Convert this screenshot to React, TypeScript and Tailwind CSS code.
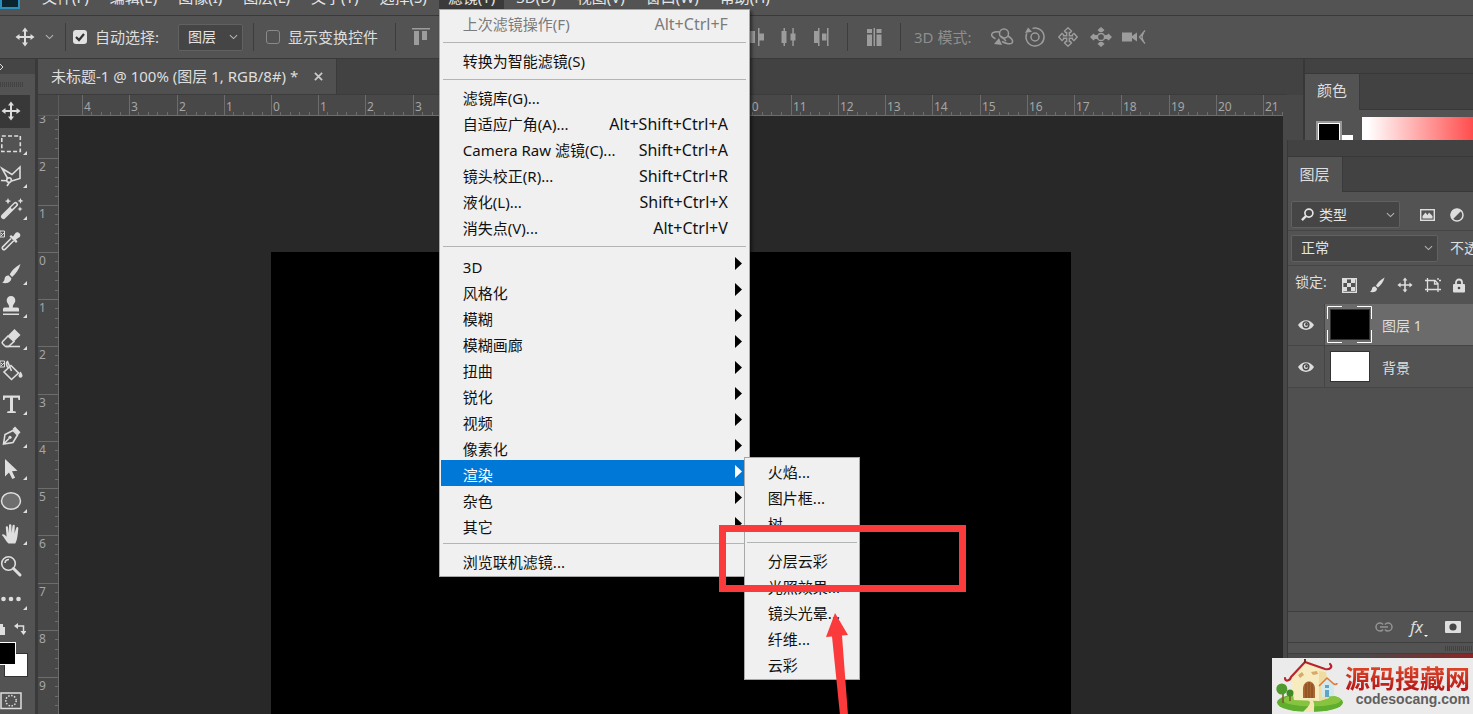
import type { ReactNode } from "react"

const UNIT = 47.24

const menusBefore = ["文件(F)", "编辑(E)", "图像(I)", "图层(L)", "文字(Y)", "选择(S)"]
const menusAfter = ["3D(D)", "视图(V)", "窗口(W)", "帮助(H)"]

interface MenuEntry {
  label: string
  keys?: string
  disabled?: boolean
}

const filterGroups: MenuEntry[][] = [
  [{ label: "上次滤镜操作(F)", keys: "Alt+Ctrl+F", disabled: true }],
  [{ label: "转换为智能滤镜(S)" }],
  [
    { label: "滤镜库(G)..." },
    { label: "自适应广角(A)...", keys: "Alt+Shift+Ctrl+A" },
    { label: "Camera Raw 滤镜(C)...", keys: "Shift+Ctrl+A" },
    { label: "镜头校正(R)...", keys: "Shift+Ctrl+R" },
    { label: "液化(L)...", keys: "Shift+Ctrl+X" },
    { label: "消失点(V)...", keys: "Alt+Ctrl+V" },
  ],
]

const filterCategories = ["3D", "风格化", "模糊", "模糊画廊", "扭曲", "锐化", "视频", "像素化", "渲染", "杂色", "其它"]

const renderGroups = [
  ["火焰...", "图片框...", "树..."],
  ["分层云彩", "光照效果...", "镜头光晕...", "纤维...", "云彩"],
]

function MoveIcon({ className }: { className?: string }) {
  return (
    <svg viewBox="0 0 20 20" className={className} fill="currentColor">
      <path d="M10 .5 13 4.500H11V9h4.500V7l4 3-4 3v-2H11v4.500h2L10 19.500 7 15.500h2V11H4.500v2l-4-3 4-3v2H9V4.500H7z" />
    </svg>
  )
}

function BrushIcon({ className }: { className?: string }) {
  return (
    <svg viewBox="0 0 20 20" className={className} fill="currentColor">
      <path d="M19.500.5C14 3.500 10.500 7.500 8.700 10.800l2.400 2.400C14.500 10.500 18 6 19.500.5zM7.700 11.800c-2-.3-3.700.8-4 2.800-.2 1.700-1 3-2.700 3.900 3.500 1.200 8.800.4 9.200-3.900z" />
    </svg>
  )
}

function Chevron({ className }: { className?: string }) {
  return (
    <svg viewBox="0 0 10 6" className={className} fill="none" stroke="currentColor" strokeWidth="1.200">
      <path d="M1 1l4 3.800L9 1" />
    </svg>
  )
}

function Select({ label, value, className, icon }: { label: string; value: string; className: string; icon?: ReactNode }) {
  return (
    <div className={`relative flex h-[27px] items-center rounded-[2px] border border-[#616161] bg-[#454545] text-[#e4e4e4] ${className}`}>
      {icon}
      <select aria-label={label} className="h-full min-w-0 flex-1 appearance-none bg-transparent pl-[9px] text-sm outline-none">
        <option>{value}</option>
      </select>
      <Chevron className="pointer-events-none mr-1 h-[6px] w-[9px] text-[#b5b5b5]" />
    </div>
  )
}

function Separator() {
  return (
    <div className="flex h-[11px] items-center px-[2px]">
      <div className="h-px w-full bg-[#b4b4b4]" />
    </div>
  )
}

function RenderMenu() {
  return (
    <div className="absolute left-[304px] top-[447px] z-10 w-[116px] border border-[#a8a8a8] bg-[#f0f0f0] py-px text-[#111]">
      {renderGroups.map((group, i) => (
        <div key={i}>
          {i > 0 && <Separator />}
          {group.map((label) => (
            <button key={label} className="block h-[26px] w-full whitespace-nowrap pl-[23px] text-left">
              {label}
            </button>
          ))}
        </div>
      ))}
    </div>
  )
}

function FilterMenu() {
  return (
    <div className="absolute left-0 top-full z-20 w-[311px] border border-[#a8a8a8] bg-[#f0f0f0] p-px text-[15px] leading-[26px] text-[#111] shadow-[2px_2px_3px_rgba(0,0,0,0.5)]">
      {filterGroups.map((group, i) => (
        <div key={i}>
          {group.map((item) => (
            <button
              key={item.label}
              disabled={item.disabled}
              className="flex h-[26px] w-full items-center justify-between whitespace-nowrap pl-[22px] pr-[20px] disabled:text-[#7b7b7b]"
            >
              <span>{item.label}</span>
              <span className="text-base leading-[26px]">{item.keys}</span>
            </button>
          ))}
          <Separator />
        </div>
      ))}
      {filterCategories.map((label) => (
        <button
          key={label}
          className={
            label === "渲染"
              ? "flex h-[26px] w-full items-center justify-between bg-[#0078d7] pl-[22px] pr-[6px] pt-[3px] text-white"
              : "flex h-[26px] w-full items-center justify-between pl-[22px] pr-[6px] pt-[3px]"
          }
        >
          <span>{label}</span>
          <svg viewBox="0 0 7 20" className="h-5 w-[7px]" fill={label === "渲染" ? "#fff" : "#000"}>
            <path d="M0 0v13l7-6.500z" />
          </svg>
        </button>
      ))}
      <Separator />
      <button className="block h-[26px] w-full pl-[22px] text-left">浏览联机滤镜...</button>
      <RenderMenu />
    </div>
  )
}

function MenuBar() {
  return (
    <header className="relative z-20 flex h-[15px] shrink-0 items-end gap-[3px] pb-[6px] text-[15px] leading-6 text-[#e6e6e6]">
      <div className="w-[30px]">
        <div className="h-6 w-[20px] border-2 border-[#2a8fbd] bg-[#0a2430]" />
      </div>
      {menusBefore.map((label) => (
        <button key={label} className="whitespace-nowrap px-[9px] leading-6">
          {label}
        </button>
      ))}
      <div className="relative">
        <button className="whitespace-nowrap bg-[#3a3a3a] px-[9px] leading-6">滤镜(T)</button>
        <FilterMenu />
      </div>
      {menusAfter.map((label) => (
        <button key={label} className="whitespace-nowrap px-[9px] leading-6">
          {label}
        </button>
      ))}
    </header>
  )
}

const alignShapes = [
  "M1 1h18v1.500H1zM3 4h5v14H3zM11 4h5v9h-5z",
  "M1 9h18v1.500H1zM3 2h5v16H3zM11 5h5v10h-5z",
  "M1 18h18v1.500H1zM3 2h5v14H3zM11 7h5v9h-5z",
]

const distributeShapes = [
  "M1 1h1.500v18H1zM4 4h13v5H4zM4 11h9v5H4z",
  "M9 1h1.500v18H9zM2 4h16v5H2zM5 11h10v5H5z",
  "M18 1h1.500v18H18zM4 4h13v5H4zM8 11h9v5H8z",
  "M1 2h18v1.500H1zM4 3h12v5H4zM1 11h18v1.500H1zM4 12h12v5H4z",
  "M1 5h18v1.500H1zM4 3h12v5H4zM1 14h18v1.500H1zM4 12h12v5H4z",
  "M1 8h18v1.500H1zM4 3h12v5H4zM1 17h18v1.500H1zM4 12h12v5H4z",
  "M2 1h1.500v18H2zM3 4h5v12H3zM11 1h1.500v18H11zM12 6h5v8h-5z",
  "M3 4h5v12H3zM11 1h1.500v18H11zM12.500 6.500H17v7h-4.500z",
  "M2.500 4h5v12h-5zM4.500 1H6v18H4.500zM11.500 6.500h5v7h-5zM13.300 1h1.500v18h-1.500z",
  "M3 4h4v12H3zM7 1h1.500v18H7zM11 6.500h4.500v7H11zM16 1h1.500v18H16z",
]

function ShapeButton({ d }: { d: string }) {
  return (
    <button className="flex w-8 justify-center text-[#9c9c9c]">
      <svg viewBox="0 0 20 20" className="size-5" fill="currentColor">
        <path d={d} />
      </svg>
    </button>
  )
}

function Divider() {
  return <div className="h-7 w-px shrink-0 bg-[#3d3d3d]" />
}

function OptionsBar() {
  return (
    <div className="flex h-[44px] shrink-0 items-center border-y border-[#393939] text-[15px] text-[#dedede]">
      <MoveIcon className="ml-[15px] size-5 shrink-0" />
      <Chevron className="ml-[10px] h-[6px] w-[9px] shrink-0 text-[#b5b5b5]" />
      <div className="w-[11px] shrink-0" />
      <Divider />
      <label className="ml-[7px] flex shrink-0 items-center gap-2">
        <span className="relative flex">
          <input type="checkbox" defaultChecked className="peer size-[14px] appearance-none rounded-[3px] bg-[#e2e2e2]" />
          <svg viewBox="0 0 14 14" className="pointer-events-none absolute inset-0 hidden size-[14px] peer-checked:block" fill="none" stroke="#333" strokeWidth="2.200">
            <path d="M3 7l3 3 5-6" />
          </svg>
        </span>
        <span className="w-[68px] whitespace-nowrap">自动选择:</span>
      </label>
      <div className="ml-[15px] w-[65px] shrink-0">
        <Select label="自动选择" value="图层" className="w-full" />
      </div>
      <div className="w-[10px] shrink-0" />
      <Divider />
      <label className="ml-3 flex shrink-0 items-center gap-2">
        <input type="checkbox" className="size-[14px] appearance-none rounded-[3px] border border-[#8a8a8a]" />
        显示变换控件
      </label>
      <div className="w-[17px] shrink-0" />
      <Divider />
      <div className="ml-[9px] flex shrink-0">
        {alignShapes.map((d) => (
          <ShapeButton key={d} d={d} />
        ))}
      </div>
      <div className="flex w-4 shrink-0 justify-center">
        <Divider />
      </div>
      <div className="flex shrink-0">
        {distributeShapes.map((d) => (
          <ShapeButton key={d} d={d} />
        ))}
      </div>
      <div className="flex shrink-0 items-center gap-[10px] pl-[10px]">
        <Divider />
        <ShapeButton d="M3 2h5v4H3zM3 7.500h5V19H3zM9.500 1h1.500v18H9.500zM12.500 2h5v4h-5zM12.500 7.500h5V19h-5z" />
        <Divider />
      </div>
      <span className="ml-[13px] shrink-0 text-[#8e8e8e]">3D 模式:</span>
      <div className="ml-[14px] flex shrink-0 text-[#9c9c9c]">
        <button className="flex w-[33px] justify-center">
          <svg viewBox="0 0 24 20" className="h-5 w-6" fill="none" stroke="currentColor" strokeWidth="1.500">
            <circle cx="14" cy="6.500" r="4.500" />
            <path d="M9.500 5C4 4 .5 6.500 2 9c.6 1 2 2 3.500 2.700M18 9c4 2.500 5.500 5 4 7-1.500 1.500-6 .8-10-1.500M11 9l5 5" />
            <path d="M4 17l8 1-3-7z" fill="currentColor" stroke="none" />
          </svg>
        </button>
        <button className="flex w-[33px] justify-center">
          <svg viewBox="0 0 20 20" className="size-5" fill="none" stroke="currentColor" strokeWidth="1.500">
            <circle cx="10" cy="10" r="4" />
            <path d="M7.500 1.400a9 9 0 1 1-5.700 5" />
            <path d="M0 6 3 .5l4 4.300z" fill="currentColor" stroke="none" />
          </svg>
        </button>
        <button className="flex w-[33px] justify-center">
          <svg viewBox="0 0 20 20" className="size-5" fill="none" stroke="currentColor" strokeWidth="1.400">
            <path d="M10 .8 13.500 4 12.500 5.500h-1.200v3.200h3.200V7.500L16 6.500l3.200 3.500-3.200 3.500-1.500-1v-1.200h-3.200v3.200h1.200l1 1.500L10 19.200 6.500 16l1-1.500h1.200v-3.200H5.500v1.200l-1.500 1L.8 10 4 6.500l1.500 1v1.200h3.200V5.500H7.500L6.500 4z" />
          </svg>
        </button>
        <button className="flex w-[33px] justify-center">
          <svg viewBox="0 0 22 20" className="h-5 w-[22px]" fill="currentColor">
            <circle cx="11" cy="10" r="3.600" fill="none" stroke="currentColor" strokeWidth="1.500" />
            <path d="M11 0l3.500 3-2 2h-3l-2-2zM11 20l3.500-3-2-2h-3l-2 2zM0 10l3.500-3.500L5 8h2v4H5l-1.500 1.500zM22 10l-3.500-3.500L17 8h-2v4h2l1.500 1.500z" />
          </svg>
        </button>
        <button className="flex w-[33px] justify-center">
          <svg viewBox="0 0 24 20" className="h-5 w-6" fill="currentColor">
            <path d="M0 5.500h10V9l5-3.500v9L10 11v3.500H0z" />
            <path d="M23 3.500l-5.500 6.500 5.500 6.500M21.500 6c-1.800 2.500-1.800 5.500 0 8" fill="none" stroke="currentColor" strokeWidth="1.300" />
          </svg>
        </button>
      </div>
    </div>
  )
}

const stroke = { fill: "none", stroke: "currentColor", strokeWidth: 1.6 }

const tools: { name: string; flyout: boolean; icon: ReactNode }[] = [
  { name: "移动", flyout: false, icon: <path d="M11 1.500 14 5.500H12V10h4.500V8l4 3-4 3v-2H12v4.500h2L11 20.500 8 16.500h2V12H5.500v2l-4-3 4-3v2H10V5.500H8z" fill="currentColor" /> },
  { name: "矩形选框", flyout: true, icon: <rect x="1.800" y="3" width="18.500" height="15.500" {...stroke} strokeDasharray="4 2.200" /> },
  {
    name: "套索",
    flyout: true,
    icon: (
      <g {...stroke}>
        <path d="M8 14 2 3.500l10 6L20 2v11.500l-8.500 2.500" />
        <circle cx="9" cy="15" r="2.300" />
        <path d="M1 15.500l6 .3M9.500 17.300 7 21" />
      </g>
    ),
  },
  {
    name: "魔棒",
    flyout: true,
    icon: (
      <g>
        <path d="M3.500 18.500 15.500 6.500" stroke="currentColor" strokeWidth="5" strokeLinecap="round" />
        <path d="M12 9.800l3.400-3.300" stroke="#535353" strokeWidth="2" strokeLinecap="round" />
        <path d="M8 0l1 2.200L11.200 3 9 4 8 6.200 7 4 4.800 3 7 2.200zM20.500 0l.9 2 2 .9-2 .9-.9 2-.9-2-2-.9 2-.9zM20 8.500l.8 1.700 1.700.8-1.700.8-.8 1.700-.8-1.700-1.700-.8 1.700-.8z" fill="currentColor" />
      </g>
    ),
  },
  {
    name: "吸管",
    flyout: false,
    icon: (
      <g>
        <path d="M11 8.500l-8.500 8.600c-1 1.200.8 3.400 2.500 2.200l8.700-8.500" {...stroke} />
        <path d="M9.500 6.500 11 5l2 1.500L15.500 3c2-2.500 6.500 1 4.200 4L16 9.500l1.500 2-1.500 1.500z" fill="currentColor" />
        <path d="M0 1h4.500v6H0z" fill="none" stroke="currentColor" />
        <path d="M1 3h1v1H1zM3 3h1v1H3zM2 4h1v1H2zM1 5h1v1H1z" fill="currentColor" />
      </g>
    ),
  },
  { name: "画笔", flyout: true, icon: <path d="M20.500 1C15 4 11.500 8 9.700 11.500l2.400 2.400C15.500 11 19 6.500 20.500 1zM8.700 12.500c-2-.3-3.700.8-4 2.800-.2 1.700-.8 3.500-2.500 4.400 3.500 1.200 8.800.4 9.200-4.400z" fill="currentColor" /> },
  { name: "仿制图章", flyout: true, icon: <path d="M11 1a4.300 4.300 0 0 0-4.300 4.400c0 2.600 2.500 3.400 2.500 7.100H4.500A1.500 1.500 0 0 0 3 14v2.500h16V14a1.500 1.500 0 0 0-1.500-1.500h-4.700c0-3.700 2.500-4.500 2.500-7.100A4.300 4.300 0 0 0 11 1zM3 18.500h16V20H3z" fill="currentColor" /> },
  {
    name: "橡皮擦",
    flyout: true,
    icon: (
      <g>
        <path d="M8 7.500 14.500 1 20.500 7 14 13.500z" fill="currentColor" />
        <path d="M8 8l-5.300 5.500c-.8.8-.8 1.500 0 2.300L5.500 18.500h3l5.500-5z" {...stroke} />
        <path d="M6 18.500h14" {...stroke} />
      </g>
    ),
  },
  {
    name: "油漆桶",
    flyout: false,
    icon: (
      <g>
        <path d="M11 5.500 4 12l7.500 7.500L18.500 13zM11.500 11 7.500 1.500C6 2 6 6 8.500 8" {...stroke} />
        <path d="M20.500 11.500c1.300 2 2 3.300 2 4.300a2 2 0 0 1-4 0c0-1 .7-2.300 2-4.300z" fill="currentColor" />
        <path d="M0 1h4.500v6H0z" fill="none" stroke="currentColor" />
        <path d="M1 3h1v1H1zM3 3h1v1H3zM2 4h1v1H2zM1 5h1v1H1z" fill="currentColor" />
      </g>
    ),
  },
  { name: "文字", flyout: true, icon: <path d="M3 2.500h17V7h-1.500l-.5-2.300h-5V18l2.800.5V20H7.200v-1.500L10 18V4.700H5L4.500 7H3z" fill="currentColor" /> },
  {
    name: "钢笔",
    flyout: true,
    icon: (
      <g>
        <path d="M3.500 19 5 9.500l8-4L17.500 10 13 17.500zM3.500 19l5.500-5.500" {...stroke} />
        <circle cx="10" cy="12.300" r="1.600" fill="currentColor" />
        <path d="M12.500 4 15 1.500l5.500 5.700L18 10z" fill="currentColor" />
      </g>
    ),
  },
  { name: "路径选择", flyout: true, icon: <path d="M5 1v17.500l4-4 3.300 6.500 2.800-1.300L12 13.200l5.500-.5z" fill="currentColor" /> },
  { name: "椭圆", flyout: true, icon: <ellipse cx="11" cy="11" rx="9.500" ry="8.300" fill="#6e6e6e" stroke="currentColor" strokeWidth="1.500" /> },
  { name: "抓手", flyout: true, icon: <path d="M8.500 20.500c-2.500-2-4-6-6.700-8.500 1-1.500 3-.8 4.800 1.700L5.800 4.500c0-1.500 2-1.600 2.300 0l.9 5.700V2.500c0-1.700 2.300-1.700 2.400 0l.2 7.500.9-7.300c.3-1.500 2.300-1.300 2.300.2l-.3 7.600 1.700-5.600c.5-1.400 2.300-.9 2.100.6-.5 4-.6 11-3 15z" fill="currentColor" /> },
  {
    name: "缩放",
    flyout: false,
    icon: (
      <g>
        <circle cx="8.500" cy="8.500" r="6.800" {...stroke} />
        <path d="M5 8a4 4 0 0 1 4-3.500" {...stroke} />
        <path d="M13.500 13.500 20 20" stroke="currentColor" strokeWidth="3" strokeLinecap="round" />
      </g>
    ),
  },
  {
    name: "更多",
    flyout: true,
    icon: (
      <g fill="currentColor">
        <circle cx="3.500" cy="11" r="2.300" />
        <circle cx="11" cy="11" r="2.300" />
        <circle cx="18.500" cy="11" r="2.300" />
      </g>
    ),
  },
]

function Toolbox() {
  return (
    <aside className="flex w-[38px] shrink-0 flex-col border-r-[3px] border-[#3a3a3a] text-[#dedede]">
      <div className="flex h-[15px] items-center bg-[#454545]">
        <svg viewBox="0 0 4 8" className="h-2 w-1" fill="none" stroke="currentColor">
          <path d="M0 1l3 3-3 3" />
        </svg>
      </div>
      <div className="flex h-[21px] items-center">
        <div className="h-[5px] w-[24px] bg-[repeating-linear-gradient(90deg,#424242_0_1px,#535353_1px_2px)]" />
      </div>
      <div className="flex h-[520px] shrink-0 flex-col">
        {tools.map((tool, i) => (
          <button
            key={tool.name}
            aria-label={tool.name}
            className={i === 0 ? "flex w-[30px] flex-1 items-center bg-[#383838]" : "flex flex-1 items-center"}
          >
            <svg viewBox="0 0 22 22" className="size-[22px] overflow-visible">
              {tool.icon}
            </svg>
            {tool.flyout && (
              <svg viewBox="0 0 4 4" className="mb-[5px] ml-px size-1 self-end" fill="currentColor">
                <path d="M4 0v4H0z" />
              </svg>
            )}
          </button>
        ))}
      </div>
      <div className="flex h-[27px] shrink-0 items-center justify-between pr-[9px]">
        <svg viewBox="0 0 5 12" className="h-3 w-[5px]" fill="currentColor">
          <path d="M0 1h3v3h2v8H0z" />
        </svg>
        <svg viewBox="0 0 12 12" className="size-3" fill="none" stroke="currentColor" strokeWidth="1.500">
          <path d="M3 3h6.500v6" />
          <path d="M4 0v6L0 3zM6.500 8h6l-3 4z" fill="currentColor" stroke="none" />
        </svg>
      </div>
      <div className="relative h-[36px] shrink-0">
        <div className="absolute left-1 top-[11px] h-[24px] w-[24px] border border-[#333] bg-white" />
        <div className="absolute left-0 top-0 h-[23px] w-4 border-y border-r border-white bg-black" />
      </div>
      <button aria-label="快速蒙版" className="mt-[14px] flex shrink-0">
        <svg viewBox="0 0 22 18" className="h-[18px] w-[22px]" fill="none" stroke="currentColor" strokeWidth="1.500">
          <rect x="1" y="1" width="20" height="15.500" />
          <circle cx="11" cy="8.700" r="5.200" strokeDasharray="1.500 1.500" />
        </svg>
      </button>
    </aside>
  )
}

const minors = [1, 2, 3, 4]
const horizontalMarks = Array.from({ length: 26 }, (_, i) => i - 4)
const verticalMarks = Array.from({ length: 13 }, (_, i) => i - 3)

function HorizontalRuler() {
  return (
    <div className="relative h-[21px] flex-1 overflow-hidden border-b border-[#6c6c6c]">
      {horizontalMarks.map((n) => (
        <div key={n} className="absolute inset-y-0" style={{ left: Math.round(212 + n * UNIT) }}>
          <span className="absolute inset-y-0 left-0 w-px bg-[#6c6c6c]" />
          <span className="block pl-[2px] text-xs leading-[24px]">{Math.abs(n)}</span>
          {minors.map((m) => (
            <span key={m} className="absolute bottom-0 h-[3px] w-px bg-[#6c6c6c]" style={{ left: Math.round((m * UNIT) / 5) }} />
          ))}
        </div>
      ))}
    </div>
  )
}

function VerticalRuler() {
  return (
    <div className="relative w-[21px] shrink-0 overflow-hidden border-r border-[#6c6c6c] bg-[#484848]">
      {verticalMarks.map((n) => (
        <div key={n} className="absolute inset-x-0" style={{ top: Math.round(136 + n * UNIT) }}>
          <span className="absolute inset-x-0 top-0 h-px bg-[#6c6c6c]" />
          <span className="block pl-px text-xs leading-[18px]">{Math.abs(n)}</span>
          {minors.map((m) => (
            <span key={m} className="absolute right-0 h-px w-[3px] bg-[#6c6c6c]" style={{ top: Math.round((m * UNIT) / 5) }} />
          ))}
        </div>
      ))}
    </div>
  )
}

function DocumentArea() {
  return (
    <main className="flex min-w-0 flex-1 flex-col text-[#a5a5a5]">
      <div className="flex h-[36px] shrink-0 border-b border-[#3c3c3c] bg-[#424242]">
        <div className="flex items-center gap-4 border-r border-[#3a3a3a] bg-[#505050] pl-[13px] pr-[13px] text-[15px] text-[#dedede]">
          <span className="whitespace-nowrap">未标题-1 @ 100% (图层 1, RGB/8#) *</span>
          <button aria-label="关闭">
            <svg viewBox="0 0 10 10" className="size-[9px]" stroke="#c8c8c8" strokeWidth="2">
              <path d="M1 1l8 8M9 1L1 9" />
            </svg>
          </button>
        </div>
      </div>
      <div className="flex shrink-0 bg-[#484848]">
        <div className="w-[21px] shrink-0 border-b border-r border-[#5c5c5c]" />
        <HorizontalRuler />
        <div className="w-1" />
      </div>
      <div className="flex min-h-0 flex-1">
        <VerticalRuler />
        <div className="min-w-0 flex-1 overflow-hidden bg-[#282828] pl-[212px] pt-[136px]">
          <div className="h-full w-[800px] bg-black" />
        </div>
        <div className="w-1 bg-[#484848]" />
      </div>
    </main>
  )
}

function EyeIcon() {
  return (
    <svg viewBox="0 0 16 12" className="h-3 w-4">
      <path d="M0 6c4-6.500 12-6.500 16 0-4 6.500-12 6.500-16 0z" fill="#dedede" />
      <circle cx="8" cy="5.800" r="3.600" fill="#484848" />
      <circle cx="8" cy="5.800" r="2.200" fill="#dedede" />
      <circle cx="8.500" cy="5.400" r="1.300" fill="#484848" />
    </svg>
  )
}

function ColorPanel() {
  return (
    <section className="ml-4 h-[81px] shrink-0 overflow-hidden border-l-2 border-[#383838] bg-[#535353]">
      <div className="h-[15px] border-b border-[#383838] bg-[#424242]" />
      <div className="flex h-[36px] bg-[#424242]">
        <h2 className="flex w-[55px] items-center justify-center border-r border-[#3a3a3a] bg-[#535353] pb-[3px] text-[15px]">颜色</h2>
        <div className="flex-1 border-b border-[#383838]" />
      </div>
      <div className="flex pt-[7px]">
        <div className="flex w-[57px] shrink-0 pl-[11px] pt-1">
          <div className="h-8 w-[26px] border-2 border-[#999] bg-white p-px">
            <div className="h-full bg-black" />
          </div>
          <div className="mt-[14px] h-4 w-[11px] bg-white" />
        </div>
        <div className="h-8 flex-1 bg-[linear-gradient(90deg,#fff_5%,#ff4d4d)]" />
      </div>
    </section>
  )
}

function LayerRow({ name, selected }: { name: string; selected?: boolean }) {
  return (
    <div className="flex h-[42px] border-b border-[#454545]">
      <button aria-label="可见性" className="flex w-[37px] items-center justify-center border-r border-[#454545]">
        <EyeIcon />
      </button>
      <div className={selected ? "flex flex-1 items-center bg-[#6b6b6b] pl-[2px]" : "flex flex-1 items-center pl-[2px]"}>
        <div className="relative flex h-[37px] w-[45px] items-center justify-center">
          <div className={selected ? "h-[31px] w-[40px] border border-[#333] bg-black" : "h-[31px] w-[40px] border border-[#333] bg-white"} />
          {selected && (
            <svg viewBox="0 0 45 37" className="absolute inset-0" fill="none" stroke="#fff">
              <path d="M.5 13V.5H15M30 .5h14.500V13M44.500 24v12.500H30M15 36.500H.5V24" />
            </svg>
          )}
        </div>
        <span className="pl-[10px] pt-[2px] text-sm">{name}</span>
      </div>
    </div>
  )
}

function LayersPanel() {
  return (
    <section className="flex min-h-0 flex-1 flex-col border-l border-[#383838] bg-[#535353]">
      <div className="h-[17px] shrink-0 border-b border-[#383838] bg-[#424242]" />
      <div className="flex h-[35px] shrink-0 bg-[#424242]">
        <h2 className="flex w-[55px] items-center justify-center border-r border-[#3a3a3a] bg-[#535353] pb-px pr-px text-[15px]">图层</h2>
        <div className="flex-1 border-b border-[#383838]" />
      </div>
      <div className="flex h-[39px] shrink-0 items-end gap-[20px] border-b border-[#454545] pb-[2px] pl-[3px]">
        <Select
          label="类型"
          value="类型"
          className="w-[109px] shrink-0"
          icon={
            <svg viewBox="0 0 14 14" className="ml-[9px] -mr-1 size-[13px]" fill="none" stroke="currentColor" strokeWidth="1.800">
              <circle cx="8.500" cy="5.500" r="4.300" />
              <path d="M5.300 8.800 1 13" strokeWidth="2.500" />
            </svg>
          }
        />
        <div className="flex h-[27px] items-center gap-[15px]">
          <svg viewBox="0 0 15 12" className="h-3 w-[15px]">
            <rect x=".7" y=".7" width="13.600" height="10.600" fill="none" stroke="#dedede" strokeWidth="1.400" />
            <path d="M2.500 9.500V7L5.500 3.500l2 2.500 1.500-2.500L12.500 7v2.500z" fill="#dedede" />
          </svg>
          <svg viewBox="0 0 14 14" className="size-[14px]">
            <circle cx="7" cy="7" r="6" fill="none" stroke="#dedede" strokeWidth="1.500" />
            <path d="M11.500 2.500A6.300 6.300 0 0 0 2.500 11.500z" fill="#dedede" />
          </svg>
        </div>
      </div>
      <div className="flex h-[35px] shrink-0 items-center gap-3 whitespace-nowrap border-b border-[#454545] pl-[3px] text-sm">
        <Select label="混合模式" value="正常" className="w-[147px] shrink-0" />
        不透明度:
      </div>
      <div className="flex h-[38px] shrink-0 items-center pl-[7px] text-[#dedede]">
        <span className="w-[47px] self-start text-sm leading-8">锁定:</span>
        <div className="flex items-center gap-3">
          <svg viewBox="0 0 15 15" className="size-[15px]">
            <rect x=".7" y=".7" width="13.600" height="13.600" fill="none" stroke="#dedede" strokeWidth="1.400" />
            <path d="M1 1h4v4H1zM9 1h4v4H9zM5 5h4v4H5zM1 9h4v4H1zM9 9h4v4H9z" fill="#dedede" />
          </svg>
          <BrushIcon className="size-4" />
          <MoveIcon className="size-4" />
          <svg viewBox="0 0 16 14" className="h-[14px] w-4" fill="none" stroke="currentColor" strokeWidth="1.300">
            <path d="M2.500 0v14M0 2.500h10l3 3V14M0 11.500h16M9.500 2.500v3.500h3.500M13 0v2M14 2.500h2" />
          </svg>
          <svg viewBox="0 0 12 15" className="h-[15px] w-3">
            <path d="M3 7V4.500a3 3 0 0 1 6 0V7" fill="none" stroke="#dedede" strokeWidth="1.800" />
            <rect y="6" width="12" height="8.500" rx="1" fill="#dedede" />
            <circle cx="6" cy="10" r="1.300" fill="#484848" />
          </svg>
        </div>
      </div>
      <LayerRow name="图层 1" selected />
      <LayerRow name="背景" />
      <div className="flex-1 bg-[#505050]" />
      <div className="flex h-[32px] shrink-0 items-center justify-end gap-[17px] border-y border-[#3e3e3e] pr-[12px]">
        <svg viewBox="0 0 18 10" className="h-[10px] w-[18px]" fill="none" stroke="#949494" strokeWidth="1.500">
          <path d="M8 7.500C7 9 6 9 5 9a4 4 0 0 1 0-8c1 0 2 0 3 1.500M10 2.500C11 1 12 1 13 1a4 4 0 0 1 0 8c-1 0-2 0-3-1.500M5 5h8" />
        </svg>
        <button className="flex items-end text-base italic leading-5">
          fx
          <svg viewBox="0 0 4 2" className="ml-px h-[2px] w-1" fill="#fff">
            <path d="M0 0h4L2 2z" />
          </svg>
        </button>
        <svg viewBox="0 0 16 12" className="h-3 w-4">
          <rect width="16" height="12" rx="1" fill="#dedede" />
          <circle cx="8" cy="6" r="3.600" fill="#444" />
        </svg>
      </div>
      <div className="flex h-[11px] shrink-0 items-center justify-end border-b border-[#3e3e3e]">
        <div className="h-[5px] w-[28px] bg-[repeating-linear-gradient(90deg,#424242_0_1px,#535353_1px_2px)]" />
      </div>
      <div className="h-[60px] shrink-0 bg-[linear-gradient(90deg,#4a4a4a_40%,#8c2525)]" />
    </section>
  )
}

function Watermark() {
  return (
    <div className="absolute bottom-0 right-0 z-30 flex h-14 w-[201px] items-center justify-between bg-[#ecebeb] pl-1 pr-[3px]">
      <svg viewBox="0 0 68 54" className="h-[54px] w-[68px] shrink-0">
        <ellipse cx="34" cy="43.500" rx="33" ry="9.500" fill="#5fae2e" />
        <ellipse cx="36" cy="41" rx="29" ry="6.500" fill="#86c440" />
        <path d="M14 20 29 3l21 9 3 27-10 3-25-1z" fill="#f7ecc0" />
        <path d="M43 12l7 1 3 26-10 3z" fill="#efdca2" />
        <path d="M9 19c0 4 5 3 6-1L29 3l20 7c5 1 8-2 5-5" fill="none" stroke="#b8242c" strokeWidth="2.200" strokeLinecap="round" />
        <path d="M29 0v4" stroke="#7c2a20" strokeWidth="2" />
        <path d="M22 16l4-3 2 3-4 3zM35 13l6-1 1 3-5 1z" fill="#d9a86c" />
        <path d="M27 39V30c0-10 12-10 12 0v9z" fill="#a9662f" />
        <path d="M30 39V25M33 39V23M36 39V25" stroke="#7c4620" />
        <path d="M45 26l6-6 7 6v11l-12 1z" fill="#d3e9ee" />
        <path d="M43 27l8-8 7 6c2 1 3 0 3-1" fill="none" stroke="#e07b3c" strokeWidth="1.600" />
        <path d="M49 31h4v7h-4zM49 26h4v3h-4z" fill="#5ea6c4" />
        <path d="M30 40c7 3 4 6-3 13h11c0-5 1-9-2-13z" fill="#f4e7b4" />
        <path d="M7 32v12M14 37v5" stroke="#7c5a2a" strokeWidth="1.500" />
        <circle cx="5.800" cy="30" r="5.500" fill="#4f9a2c" />
        <circle cx="14" cy="34" r="3.500" fill="#3f8a25" />
      </svg>
      <div className="flex flex-col items-end whitespace-nowrap">
        <span className="bg-gradient-to-b from-[#e2472a] to-[#b31217] bg-clip-text text-[25px] font-bold leading-[26px] text-transparent">源码搜藏网</span>
        <span className="font-['Liberation_Sans'] text-sm font-bold leading-4 text-[#5f5f5f]">codesocang.com</span>
      </div>
    </div>
  )
}

function Callout() {
  return (
    <div className="pointer-events-none absolute left-[719px] top-[525px] z-30">
      <div className="h-[67px] w-[247px] border-[7px] border-[#fb3b3b]" />
      <svg viewBox="0 0 24 102" className="ml-[106px] mt-[21px] h-[102px] w-6" fill="#fb3b3b">
        <path d="M10 0 1 24l6-.5L15 102h8L17 22.500l6-.5z" />
      </svg>
    </div>
  )
}

export default function App() {
  return (
    <div className="relative flex h-screen flex-col overflow-hidden bg-[#535353] font-['Noto_Sans','Noto_Sans_CJK_SC',sans-serif] text-[#dedede]">
      <MenuBar />
      <OptionsBar />
      <div className="flex min-h-0 flex-1">
        <Toolbox />
        <DocumentArea />
        <aside className="flex w-[186px] shrink-0 flex-col bg-[linear-gradient(#424242_36px,#484848_36px)]">
          <ColorPanel />
          <LayersPanel />
        </aside>
      </div>
      <Callout />
      <Watermark />
    </div>
  )
}
